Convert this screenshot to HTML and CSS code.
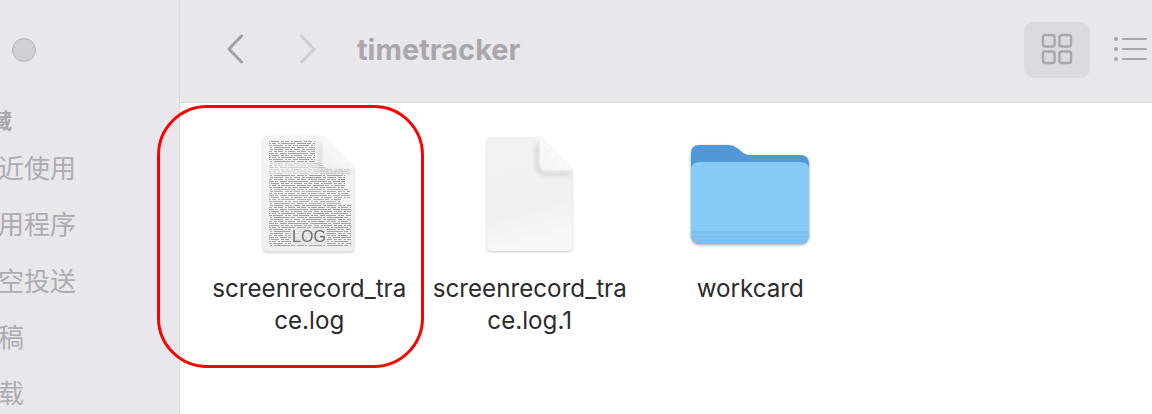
FILE: index.html
```html
<!DOCTYPE html>
<html lang="zh-CN">
<head>
    <meta charset="UTF-8">
    <title>timetracker</title>
    <link rel="stylesheet" href="styles.css">
</head>
<body>
    <div class="window">
        <aside class="sidebar">
            <div class="window-dot"></div>
            <div class="side-title" lang="zh-TW">收藏</div>
            <ul class="side-list">
                <li>最近使用</li>
                <li>应用程序</li>
                <li>隔空投送</li>
                <li>文稿</li>
                <li>下载</li>
            </ul>
        </aside>
        <main class="content">
            <header class="toolbar">
                <svg class="nav-icon" width="18" height="30" viewBox="0 0 18 30"><path d="M15.5 2 L3 15 L15.5 28" fill="none" stroke="#a3a1a7" stroke-width="3" stroke-linecap="round" stroke-linejoin="round"/></svg>
                <svg class="nav-icon forward" width="18" height="30" viewBox="0 0 18 30"><path d="M2.5 2 L15 15 L2.5 28" fill="none" stroke="#d0ced3" stroke-width="3" stroke-linecap="round" stroke-linejoin="round"/></svg>
                <h1 class="folder-name">timetracker</h1>
                <div class="view-btn">
                    <svg class="grid-icon" width="32" height="32" viewBox="0 0 32 32" fill="none" stroke="#a9a7ad" stroke-width="2.4"><rect x="2" y="2" width="11.5" height="11.5" rx="2"/><rect x="18.5" y="2" width="11.5" height="11.5" rx="2"/><rect x="2" y="18.5" width="11.5" height="11.5" rx="2"/><rect x="18.5" y="18.5" width="11.5" height="11.5" rx="2"/></svg>
                </div>
                <svg class="list-icon" width="36" height="28" viewBox="0 0 36 28" fill="#a9a7ad"><circle cx="4" cy="4" r="2.1"/><circle cx="4" cy="14" r="2.1"/><circle cx="4" cy="24" r="2.1"/><rect x="10" y="2.9" width="25" height="2.2" rx="1.1"/><rect x="10" y="12.9" width="25" height="2.2" rx="1.1"/><rect x="10" y="22.9" width="25" height="2.2" rx="1.1"/></svg>
            </header>
            <section class="file-grid">
                <div class="file-item">
                    <div class="file-icon">
                        <svg class="page-icon" width="94" height="120" viewBox="0 0 94 120">
                            <defs>
                                <linearGradient id="logPage" x1="0" y1="0" x2="0" y2="1"><stop offset="0" stop-color="#f5f5f5"/><stop offset="1" stop-color="#efefef"/></linearGradient>
                                <linearGradient id="logFold" x1="0" y1="1" x2="1" y2="0"><stop offset="0" stop-color="#f0f0f0"/><stop offset="1" stop-color="#ffffff"/></linearGradient>
                                <pattern id="logText" width="53" height="14" patternUnits="userSpaceOnUse">
                                    <g fill="none" stroke="#a2a2a2" stroke-width="1">
                                        <path stroke-dasharray="6 2 3 1 9 2 4 1 2 2" d="M0 .5H53"/>
                                        <path stroke-dasharray="2 1 7 2 3 1 5 2" d="M0 2.5H53"/>
                                        <path stroke-dasharray="12 1 3 2 7 1 20 2" d="M0 4.5H53"/>
                                        <path stroke-dasharray="4 2 2 1 8 2 3 1" d="M0 6.5H53"/>
                                        <path stroke-dasharray="9 1 4 2 2 1 14 2" d="M0 8.5H53"/>
                                        <path stroke-dasharray="3 2 5 1 10 2 2 1" d="M0 10.5H53"/>
                                        <path stroke-dasharray="7 1 2 2 16 1 4 2" d="M0 12.5H53"/>
                                    </g>
                                </pattern>
                            </defs>
                            <path d="M4 1 H61 L92 33 V113 Q92 116.5 88 116.5 H5 Q1 116.5 1 113 V5 Q1 1 4 1Z" fill="url(#logPage)"/>
                            <g class="log-lines">
                                <rect x="7" y="5" width="46" height="22" fill="url(#logText)"/>
                                <rect x="7" y="27" width="80" height="12" fill="url(#logText)" opacity=".45"/>
                                <rect x="7" y="39" width="76" height="14" fill="url(#logText)"/>
                                <rect x="7" y="53" width="81" height="11" fill="url(#logText)" opacity=".85"/>
                                <rect x="7" y="64" width="72" height="6" fill="url(#logText)" opacity=".85"/>
                                <rect x="7" y="70" width="82" height="42" fill="url(#logText)"/>
                            </g>
                            <rect x="29" y="93" width="36" height="16" fill="#efefef" opacity=".7"/>
                            <text class="log-badge" x="47" y="107" text-anchor="middle">LOG</text>
                            <path class="fold-shadow" d="M59 8 V28 Q59 36 66 36 H90 V38 H65 Q57 38 57 28 V8Z" fill="#8e8e8e" opacity=".5"/>
                            <path d="M61 1 V28 Q61 33 66 33 H92 Z" fill="url(#logFold)"/>
                        </svg>
                    </div>
                    <div class="file-label">screenrecord_tra<br>ce.log</div>
                </div>
                <div class="file-item">
                    <div class="file-icon">
                        <svg class="page-icon" width="88" height="118" viewBox="0 0 88 118">
                            <defs>
                                <linearGradient id="blankPage" x1="0" y1="0" x2="0.2" y2="1"><stop offset="0" stop-color="#f2f2f2"/><stop offset=".7" stop-color="#f0f0f0"/><stop offset="1" stop-color="#f8f8f8"/></linearGradient>
                                <linearGradient id="blankFold" x1="0" y1="1" x2="1" y2="0"><stop offset="0" stop-color="#f4f4f4"/><stop offset="1" stop-color="#ffffff"/></linearGradient>
                            </defs>
                            <path d="M4 1 H54 L86 34 V112 Q86 115 82 115 H5 Q1 115 1 112 V5 Q1 1 4 1Z" fill="url(#blankPage)"/>
                            <path class="fold-shadow" d="M52 8 V28 Q52 37 60 37 H84 V39 H59 Q50 39 50 28 V8Z" fill="#8e8e8e" opacity=".5"/>
                            <path d="M54 1 V28 Q54 34 60 34 H86 Z" fill="url(#blankFold)"/>
                        </svg>
                    </div>
                    <div class="file-label">screenrecord_tra<br>ce.log.1</div>
                </div>
                <div class="file-item">
                    <div class="file-icon">
                        <svg class="folder-icon" width="120" height="104" viewBox="0 0 120 104">
                            <path d="M1 10 Q1 1 9 1 H38 Q43 1 47 4 L52 8 Q55 11 60 11 H110 Q119 11 119 20 V90 Q119 100 109 100 H11 Q1 100 1 90Z" fill="#5099d6"/>
                            <path d="M1 26 Q1 18 10 18 H110 Q119 18 119 26 V90 Q119 100 109 100 H11 Q1 100 1 90Z" fill="#86caf8"/>
                            <path d="M1 87 H119 V90 Q119 100 109 100 H11 Q1 100 1 90Z" fill="#7dc0ef"/>
                            <path d="M1 90.5 H119 M3 94.5 H117" stroke="#86c8f5" stroke-width="1"/>
                        </svg>
                    </div>
                    <div class="file-label">workcard</div>
                </div>
            </section>
        </main>
        <div class="highlight"></div>
    </div>
</body>
</html>
```

FILE: styles.css
```css
html, body {
    margin: 0;
    padding: 0;
    background-color: white;
}
.window {
    position: relative;
    display: flex;
    width: 1152px;
    height: 414px;
    overflow: hidden;
    font-family: Inter, "Noto Sans CJK SC", sans-serif;
}
.sidebar {
    flex-shrink: 0;
    box-sizing: border-box;
    width: 180px;
    padding-top: 38px;
    background-color: #e9e7ec;
    border-right: 1px solid #dddbe0;
    overflow: hidden;
    font-family: "Noto Sans CJK SC", sans-serif;
}
.window-dot {
    width: 22px;
    height: 22px;
    margin-left: 12px;
    border: 1px solid #b8b6bb;
    border-radius: 50%;
    background-color: #d1cfd5;
}
.side-title {
    margin: 42px 0 0 -30px;
    font-size: 21px;
    line-height: 30px;
    font-weight: bold;
    color: #a9a7ad;
}
.side-list {
    list-style: none;
    margin: 5px 0 0 -28px;
    padding: 0;
}
.side-list li {
    height: 56.3px;
    line-height: 56px;
    font-size: 26px;
    white-space: nowrap;
    color: #aeacb2;
}
.content {
    flex: 1;
    min-width: 0;
}
.toolbar {
    display: flex;
    align-items: center;
    height: 102px;
    border-bottom: 1px solid #dcdbde;
    background-color: #e9e7ec;
    padding-left: 46px;
}
.nav-icon {
    flex-shrink: 0;
    margin-bottom: 4px;
}
.forward {
    margin-left: 55px;
}
.folder-name {
    flex: 1;
    margin: 0 0 3px 40px;
    font-size: 29px;
    font-weight: bold;
    color: #a9a7ad;
}
.view-btn {
    display: flex;
    align-items: center;
    justify-content: center;
    width: 66px;
    height: 56px;
    margin-bottom: 2px;
    border-radius: 10px;
    background-color: #dcdae0;
}
.grid-icon {
    margin-bottom: 3px;
}
.list-icon {
    flex-shrink: 0;
    margin: 0 4px 5px 22px;
}
.file-grid {
    display: flex;
    padding: 31px 0 0 19px;
}
.file-item {
    width: 220.5px;
    text-align: center;
}
.file-icon {
    display: flex;
    align-items: center;
    justify-content: center;
    height: 122px;
}
.page-icon {
    filter: drop-shadow(0 1px 1px rgba(0,0,0,0.22));
}
.folder-icon {
    margin-top: 2px;
    filter: drop-shadow(0 1px 1.5px rgba(0,0,0,0.35));
}
.log-lines {
    filter: blur(0.35px);
}
.fold-shadow {
    filter: blur(2px);
}
.file-label {
    margin-top: 17px;
    font-size: 24.2px;
    line-height: 32px;
    color: #2b2b2d;
}
.log-badge {
    font-family: "Liberation Sans", sans-serif;
    font-size: 16px;
    fill: #707070;
}
/* annotation drawn over the screenshot */
.highlight {
    position: absolute;
    left: 157px;
    top: 105px;
    width: 261px;
    height: 257px;
    border: 3px solid #fe0000;
    border-radius: 50px;
}
```
